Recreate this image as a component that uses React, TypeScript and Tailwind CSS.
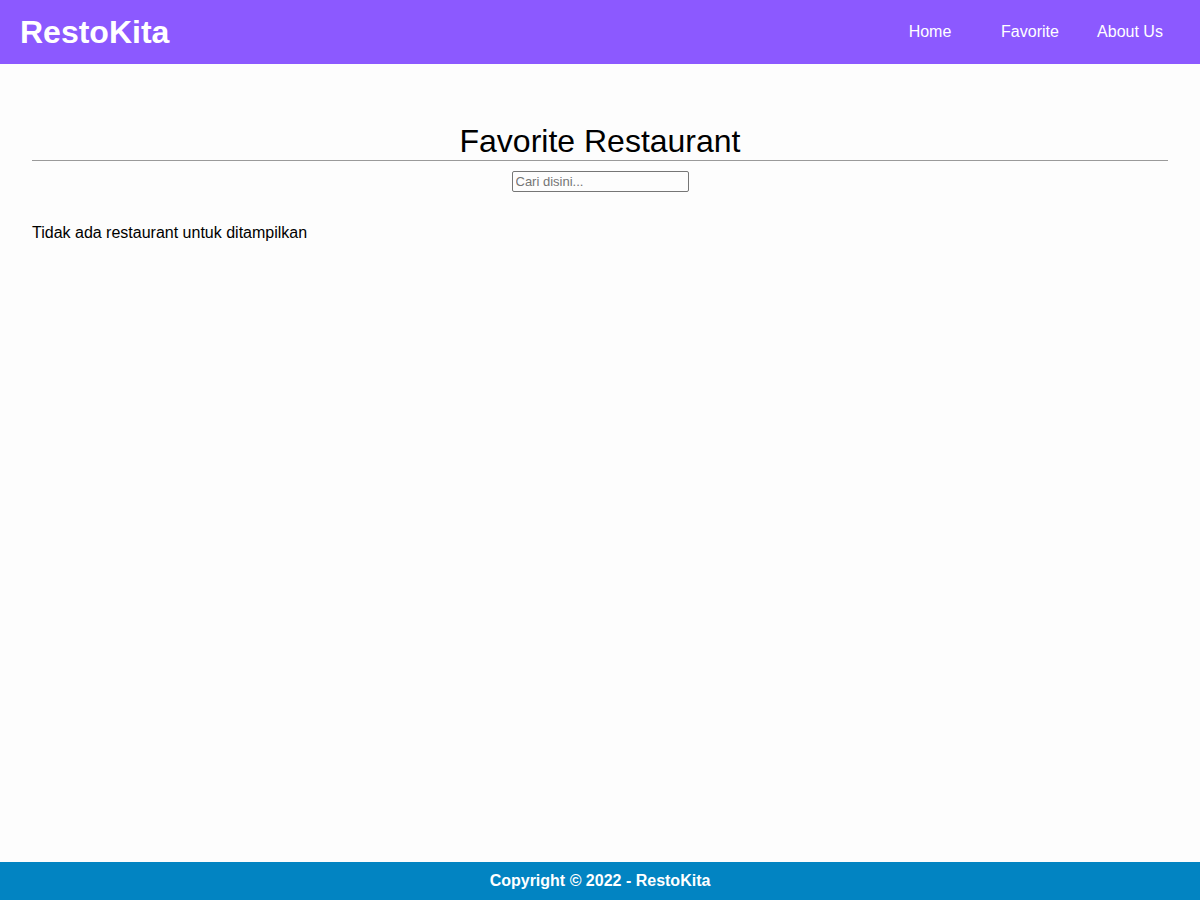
export default function App() {
  const links = ["Home", "Favorite", "About Us"];

  return (
    <div className="min-h-screen flex flex-col bg-[#fdfdfd] font-['Liberation_Sans',Arial,sans-serif] text-black">
      <header className="h-16 bg-[#8c59ff] flex items-center justify-between pl-5 pr-5">
        <a className="text-[32px] font-bold text-white leading-none">RestoKita</a>
        <nav className="flex">
          {links.map((link) => (
            <a key={link} className="w-[100px] text-center text-white text-base">
              {link}
            </a>
          ))}
        </nav>
      </header>

      <main className="flex-1 px-8 pt-[59px]">
        <h2 className="text-[32px] text-center leading-[37px] border-b border-[#9a9a9a]">
          Favorite Restaurant
        </h2>
        <div className="flex justify-center mt-[10px]">
          <input
            type="text"
            placeholder="Cari disini..."
            className="w-[177px] h-[21px] border border-[#767676] rounded-[2px] px-[3px] text-[13px] placeholder:text-[#757575]"
          />
        </div>
        <p className="mt-[29px] text-base">Tidak ada restaurant untuk ditampilkan</p>
      </main>

      <footer className="h-[38px] bg-[#0284c2] flex items-center justify-center">
        <p className="text-white font-bold text-base">Copyright © 2022 - RestoKita</p>
      </footer>
    </div>
  );
}
